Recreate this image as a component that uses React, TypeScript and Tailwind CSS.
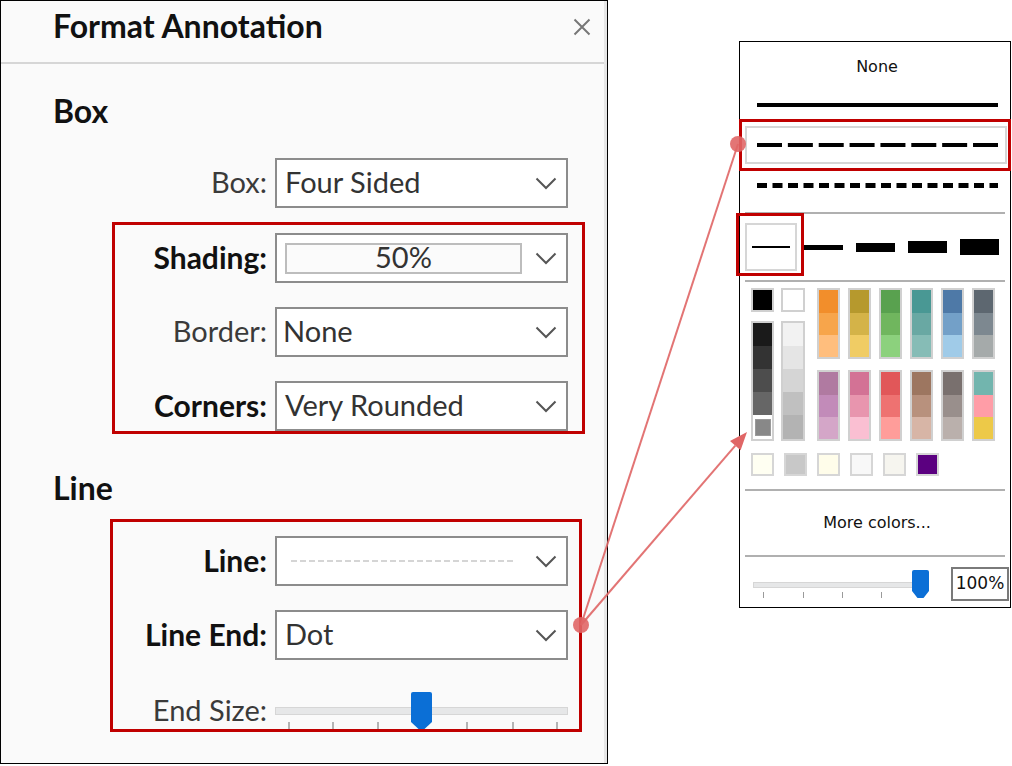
import type { ReactNode } from 'react';

const TOP_COLORS = [
  ['#f28e2b', '#f7a54b', '#ffbe7d'],
  ['#b6992d', '#d4b348', '#f0cc64'],
  ['#59a14f', '#70b65e', '#8cd17d'],
  ['#499894', '#69a8a3', '#86bcb6'],
  ['#4e79a7', '#73a0c8', '#a0cbe8'],
  ['#5d6770', '#7d8890', '#a5aaaa'],
];

const BOTTOM_COLORS = [
  ['#b07aa1', '#c28bb9', '#d4a6c8'],
  ['#d37295', '#e895ae', '#fabfd2'],
  ['#e15759', '#ee7271', '#ff9d9a'],
  ['#9d7660', '#b8917d', '#d7b5a6'],
  ['#79706e', '#998f8c', '#bab0ac'],
  ['#72b5ae', '#ff9da7', '#edc948'],
];

const EXTRA_COLORS = ['#fffff2', '#c8c8c8', '#fffdea', '#f8f8f8', '#f6f5ef', '#5b0080'];

/** Down chevron used by every dropdown in the panel. */
function Chevron() {
  return (
    <svg width="22" height="13" viewBox="0 0 22 13" className="shrink-0">
      <polyline points="1.5,1.5 11,11 20.5,1.5" fill="none" stroke="#555" strokeWidth="2" />
    </svg>
  );
}

function Select({ children }: { children?: ReactNode }) {
  return (
    <div className="flex h-[50px] w-[293px] shrink-0 items-center border-2 border-[#8c8c8c] bg-white pl-[8px] pr-[9px]">
      <div className="min-w-0 flex-1 pb-[3px] text-[29px] leading-none text-[#333]">{children}</div>
      <Chevron />
    </div>
  );
}

function Row({ label, bold = false, children }: { label: string; bold?: boolean; children: ReactNode }) {
  return (
    <div className="flex items-center justify-end gap-2">
      <span className={`pb-[3px] leading-none ${bold ? 'text-[30px] font-bold text-[#111]' : 'text-[29px] text-[#3a3a3a]'}`}>
        {label}
      </span>
      {children}
    </div>
  );
}

/** Blue slider thumb with a pointed bottom. */
function Thumb({ w, h, className }: { w: number; h: number; className: string }) {
  const tip = h - 7;
  return (
    <svg width={w} height={h} viewBox={`0 0 ${w} ${h}`} className={className}>
      <path
        d={`M2 0 H${w - 2} Q${w} 0 ${w} 2 V${tip} L${w / 2 + 3} ${h} H${w / 2 - 3} L0 ${tip} V2 Q0 0 2 0 Z`}
        fill="#0b6fd6"
      />
    </svg>
  );
}

function FormatPanel() {
  return (
    <div className="h-[764px] w-[608px] shrink-0 border border-black bg-[#fafafa] font-['Lato','Noto_Sans',sans-serif]">
      <div className="h-full border-r-[3px] border-[#e6e6e6]">
        <div className="flex h-[61px] items-start justify-between pl-[52px] pr-[13px] pt-[6px]">
          <h1 className="text-[32px] font-bold leading-[37px] text-[#111]">Format Annotation</h1>
          <svg width="18" height="18" viewBox="0 0 18 18" className="mt-[11px]">
            <path d="M1.5 1.5 L16.5 16.5 M16.5 1.5 L1.5 16.5" stroke="#777" strokeWidth="2" />
          </svg>
        </div>
        <div className="h-[2px] bg-[#d6d6d6]" />

        <h2 className="ml-[52px] mt-[28px] text-[32px] font-bold leading-[37px] text-[#111]">Box</h2>

        <div className="mt-[29px] w-[567px]">
          <Row label="Box:">
            <Select>Four Sided</Select>
          </Row>
        </div>

        <div className="ml-[111px] mt-[14px] flex w-[473px] flex-col gap-[24px] border-[3px] border-[#c00000] pr-[14px] pt-[8px]">
          <Row label="Shading:" bold>
            <div className="flex h-[50px] w-[293px] shrink-0 items-center border-2 border-[#8c8c8c] bg-white pl-[8px] pr-[9px]">
              <div className="flex h-[31px] w-[237px] items-center justify-center border-2 border-[#bdbdbd] bg-[#fbfbfb] pb-[3px] text-[29px] leading-none text-[#333]">
                50%
              </div>
              <div className="flex-1" />
              <Chevron />
            </div>
          </Row>
          <Row label="Border:">
            <Select>
              <span className="-ml-[2px]">None</span>
            </Select>
          </Row>
          <Row label="Corners:" bold>
            <Select>Very Rounded</Select>
          </Row>
        </div>

        <h2 className="ml-[52px] mt-[35px] text-[32px] font-bold leading-[37px] text-[#111]">Line</h2>

        <div className="ml-[109px] mt-[13px] flex w-[472px] flex-col border-[3px] border-[#c00000] pr-[11px] pt-[14px]">
          <Row label="Line:" bold>
            <Select>
              <svg width="222" height="2" viewBox="0 0 222 2" className="ml-[6px] mt-[3px] block">
                <line x1="0" y1="1" x2="222" y2="1" stroke="#c8c8c8" strokeWidth="1.5" strokeDasharray="6 3" />
              </svg>
            </Select>
          </Row>
          <div className="mt-[24px]">
            <Row label="Line End:" bold>
              <Select>Dot</Select>
            </Row>
          </div>
          <div className="mt-[32px] flex h-[37px] items-center justify-end gap-2">
            <span className="pb-[3px] text-[29px] leading-none text-[#3a3a3a]">End Size:</span>
            <div className="relative h-[37px] w-[293px] shrink-0">
              <div className="absolute left-0 top-[15px] h-[8px] w-[293px] border border-[#d6d6d6] bg-[#e6e7e8]" />
              {[13, 57, 102, 146, 191, 237, 281].map((x) => (
                <div key={x} className="absolute top-[30px] h-[7px] w-[2px] bg-[#b4b4b4]" style={{ left: x }} />
              ))}
              <Thumb w={21} h={37} className="absolute left-[136px] top-0" />
            </div>
          </div>
        </div>
      </div>
    </div>
  );
}

function Swatch({ color, className = '' }: { color: string; className?: string }) {
  return <div className={`w-full ${className}`} style={{ backgroundColor: color }} />;
}

function LinePopup() {
  return (
    <div className="ml-[131px] mt-[41px] flex h-[567px] w-[272px] shrink-0 flex-col border border-black bg-white font-['DejaVu_Sans','Liberation_Sans',sans-serif] text-[16px] text-[#111]">
      <div className="flex h-[50px] items-center justify-center pl-[4px]">None</div>

      <div className="flex h-[26px] items-center pl-[17px]">
        <div className="h-[4px] w-[241px] bg-black" />
      </div>

      <div className="relative h-[53px]">
        <div className="ml-[5px] mt-[8px] flex h-[38px] w-[262px] items-center border-2 border-[#d6d6d6] pl-[10px]">
          <svg width="241" height="4" viewBox="0 0 241 4">
            <line x1="0" y1="2" x2="241" y2="2" stroke="#000" strokeWidth="4" strokeDasharray="25 5.86" />
          </svg>
        </div>
        <div className="absolute -left-[1px] top-[1px] h-[52px] w-[272px] border-[3px] border-[#c00000]" />
      </div>

      <div className="flex h-[28px] items-center pl-[17px]">
        <svg width="241" height="5" viewBox="0 0 241 5">
          <line x1="0" y1="2.5" x2="241" y2="2.5" stroke="#000" strokeWidth="5" strokeDasharray="10 5.5" />
        </svg>
      </div>

      <div className="mx-[5px] mt-[13px] h-[2px] bg-[#b0b0b0]" />

      <div className="relative flex h-[66px] items-center pl-[5px]">
        <div className="flex h-[48px] w-[52px] items-center justify-center border-2 border-[#d6d6d6]">
          <div className="h-[2px] w-[38px] bg-black" />
        </div>
        <div className="ml-[7px] flex items-center gap-[13px]">
          <div className="h-[5px] w-[39px] bg-black" />
          <div className="h-[9px] w-[39px] bg-black" />
          <div className="h-[12px] w-[39px] bg-black" />
          <div className="h-[16px] w-[39px] bg-black" />
        </div>
        <div className="absolute -left-[4px] -top-[1px] h-[63px] w-[68px] border-[3px] border-[#c00000]" />
      </div>

      <div className="mx-[5px] h-[2px] bg-[#b0b0b0]" />

      <div className="ml-[11px] mt-[6px] flex">
        <div className="flex w-[23px] flex-col">
          <div className="h-[24px] border-2 border-[#d0d0d0] bg-black" />
          <div className="mt-[9px] flex h-[120px] flex-col border-2 border-[#d0d0d0]">
            <Swatch color="#1a1a1a" className="h-[23px]" />
            <Swatch color="#333333" className="h-[23px]" />
            <Swatch color="#4d4d4d" className="h-[23px]" />
            <Swatch color="#666666" className="h-[23px]" />
            <div className="flex h-[24px] items-center justify-center bg-white">
              <div className="h-[17px] w-[16px] border border-[#9a9a9a] bg-[#888888]" />
            </div>
          </div>
        </div>
        <div className="ml-[7px] flex w-[24px] flex-col">
          <div className="h-[24px] border-2 border-[#d0d0d0] bg-white" />
          <div className="mt-[9px] flex h-[120px] flex-col border-2 border-[#d0d0d0]">
            <Swatch color="#f2f2f2" className="h-[23px]" />
            <Swatch color="#e5e5e5" className="h-[23px]" />
            <Swatch color="#d5d5d5" className="h-[23px]" />
            <Swatch color="#c0c0c0" className="h-[23px]" />
            <Swatch color="#b3b3b3" className="h-[24px]" />
          </div>
        </div>
        <div className="ml-[12px] flex gap-[8px]">
          {TOP_COLORS.map((top, i) => (
            <div key={i} className="flex w-[23px] flex-col">
              <div className="flex h-[71px] flex-col border-2 border-[#d0d0d0]">
                <Swatch color={top[0]} className="h-[23px]" />
                <Swatch color={top[1]} className="h-[22px]" />
                <Swatch color={top[2]} className="h-[22px]" />
              </div>
              <div className="mt-[11px] flex h-[71px] flex-col border-2 border-[#d0d0d0]">
                <Swatch color={BOTTOM_COLORS[i][0]} className="h-[23px]" />
                <Swatch color={BOTTOM_COLORS[i][1]} className="h-[22px]" />
                <Swatch color={BOTTOM_COLORS[i][2]} className="h-[22px]" />
              </div>
            </div>
          ))}
        </div>
      </div>

      <div className="ml-[11px] mt-[12px] flex gap-[10px]">
        {EXTRA_COLORS.map((c) => (
          <div key={c} className="h-[23px] w-[23px] border-2 border-[#d6d6d6]" style={{ backgroundColor: c }} />
        ))}
      </div>

      <div className="mx-[5px] mt-[13px] h-[2px] bg-[#b0b0b0]" />
      <div className="flex h-[64px] items-center justify-center pl-[4px]">More colors...</div>
      <div className="mx-[5px] h-[2px] bg-[#b0b0b0]" />

      <div className="flex items-start pl-[13px] pt-[10px]">
        <div className="relative h-[34px] w-[176px]">
          <div className="absolute left-0 top-[15px] h-[6px] w-[172px] border border-[#d6d6d6] bg-[#e6e7e8]" />
          {[10, 50, 89, 128].map((x) => (
            <div key={x} className="absolute top-[25px] h-[6px] w-[1px] bg-[#9a9a9a]" style={{ left: x }} />
          ))}
          <Thumb w={17} h={28} className="absolute left-[159px] top-[3px]" />
        </div>
        <div className="ml-auto mr-[1px] flex h-[34px] w-[58px] items-center justify-center border-2 border-[#7a7a7a] text-[17px]">
          100%
        </div>
      </div>
    </div>
  );
}

/** Red callout lines joining the Line End row to the popup. */
function Connectors() {
  return (
    <svg className="pointer-events-none absolute inset-0" width="1012" height="766" viewBox="0 0 1012 766">
      <g stroke="#e06666" strokeWidth="2" opacity="0.9">
        <line x1="581" y1="625" x2="738" y2="144" />
        <line x1="581" y1="625" x2="735.3" y2="445.6" />
      </g>
      <polygon points="747,432 740.6,450.2 730,441" fill="#e06666" />
      <circle cx="581" cy="625" r="8" fill="#e06666" opacity="0.9" />
      <circle cx="738" cy="144" r="8" fill="#e06666" opacity="0.9" />
    </svg>
  );
}

export default function App() {
  return (
    <div className="relative flex h-[766px] w-[1012px] items-start overflow-hidden bg-white">
      <FormatPanel />
      <LinePopup />
      <Connectors />
    </div>
  );
}
